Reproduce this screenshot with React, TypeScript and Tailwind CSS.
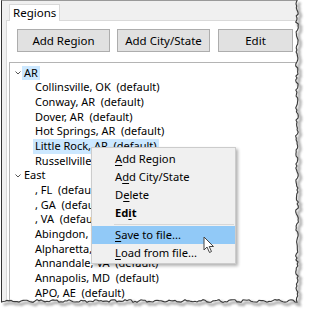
import React from 'react';

const font = { fontFamily: '"Noto Sans", "Open Sans", sans-serif' };

const tree: { label: string; children: string[] }[] = [
  {
    label: 'AR',
    children: [
      'Collinsville, OK',
      'Conway, AR',
      'Dover, AR',
      'Hot Springs, AR',
      'Little Rock, AR',
      'Russellville, AR',
    ],
  },
  {
    label: 'East',
    children: [
      ', FL',
      ', GA',
      ', VA',
      'Abingdon, VA',
      'Alpharetta, GA',
      'Annandale, VA',
      'Annapolis, MD',
      'APO, AE',
    ],
  },
];

// jagged torn edge of the screenshot
const jitter = (i: number) => Math.sin(i * 12.9898 + 78.233) * 43758.5453 % 1;

const edgePoints = () => {
  const pts: [number, number][] = [];
  for (let y = 0; y <= 300; y += 2) pts.push([297 + jitter(y) * 1.4, y]);
  for (let x = 297; x >= 0; x -= 2) pts.push([x, 301 + jitter(x + 500) * 1.4]);
  return pts;
};

const TornEdge = () => {
  const pts = edgePoints();
  const line = pts.map(([x, y], i) => `${i ? 'L' : 'M'}${x.toFixed(1)} ${y.toFixed(1)}`).join(' ');
  const shadow = pts.map(([x, y], i) => `${i ? 'L' : 'M'}${(x + 2.5).toFixed(1)} ${(y + 2.5).toFixed(1)}`).join(' ');
  return (
    <svg className="absolute inset-0 pointer-events-none" width="309" height="311">
      <defs>
        <filter id="blur" x="-10%" y="-10%" width="120%" height="120%">
          <feGaussianBlur stdDeviation="1.2" />
        </filter>
      </defs>
      <path d={`M0 0 H309 V311 H0 Z ${line} L0 0 Z`} fill="#fff" fillRule="evenodd" />
      <path d={shadow} fill="none" stroke="#777" strokeWidth="3" opacity="0.55" filter="url(#blur)" />
      <path d={line} fill="none" stroke="#3a3a3a" strokeWidth="1.1" />
    </svg>
  );
};

const Chevron = () => (
  <svg width="6" height="4" viewBox="0 0 6 4" className="shrink-0">
    <path d="M0.5 0.5 L3 3 L5.5 0.5" fill="none" stroke="#555" strokeWidth="1" />
  </svg>
);

const Btn = ({ label, w }: { label: string; w: string }) => (
  <div className={`${w} h-[23px] bg-[#e1e1e1] border border-[#adadad] flex items-center justify-center text-[11.5px] text-black`}>
    {label}
  </div>
);

const MenuItem = ({ children, active }: { children: React.ReactNode; active?: boolean }) => (
  <div className={`h-[18px] flex items-center pl-[23px] text-[11.2px] text-black ${active ? 'bg-[#91c9f7]' : ''}`}>
    {children}
  </div>
);

export default function App() {
  return (
    <div className="w-[309px] h-[311px] bg-white relative overflow-hidden" style={font}>
      <div className="ml-[1px] w-[298px] h-[302px] border-l border-t border-l-[#333] border-t-[#999] bg-[#f0f0f0] flex flex-col overflow-hidden">
        <div className="h-[19px] pl-[7px] flex items-end shrink-0">
          <div className="h-[17px] px-[3px] bg-white border border-b-0 border-[#d9d9d9] text-[11.5px] leading-[16px] text-black -mb-px relative">
            Regions
          </div>
        </div>
        <div className="ml-[4px] flex-1 bg-white border-t border-l border-[#d9d9d9] flex flex-col">
          <div className="pt-[8px] pl-[10px] flex gap-[7px]">
            <Btn label="Add Region" w="w-[93px]" />
            <Btn label="Add City/State" w="w-[93px]" />
            <div className="ml-px">
              <Btn label="Edit" w="w-[75px]" />
            </div>
          </div>
          <div className="mt-[10px] ml-[2px] flex-1 border-t border-l border-[#b4b4b4] pt-[2.6px] text-[11px] text-black">
            {tree.map((group) => (
              <div key={group.label}>
                <div className="h-[14.67px] flex items-center pl-[5px]">
                  <Chevron />
                  <span className={`ml-[1px] h-full flex items-center px-[2px] ${group.label === 'AR' ? 'bg-[#cce8ff]' : ''}`}>
                    {group.label}
                  </span>
                </div>
                {group.children.map((c) => (
                  <div key={c} className="h-[14.67px] flex items-center pl-[23px]">
                    <span
                      className={`h-full flex items-center px-[2px] whitespace-pre ${c === 'Little Rock, AR' ? 'bg-[#cce8ff]' : ''}`}
                    >
                      {c + '  (default)'}
                    </span>
                  </div>
                ))}
              </div>
            ))}
          </div>
        </div>
      </div>

      {/* context menu */}
      <div className="absolute left-[91px] top-[147px] w-[145px] h-[117px] bg-[#f0f0f0] border border-[#cccccc] pt-[2px] shadow-[2px_2px_3px_rgba(0,0,0,0.3)]">
        <MenuItem>
          <span className="underline underline-offset-2">A</span>dd Region
        </MenuItem>
        <MenuItem>
          A<span className="underline underline-offset-2">d</span>d City/State
        </MenuItem>
        <MenuItem>
          D<span className="underline underline-offset-2">e</span>lete
        </MenuItem>
        <MenuItem>
          <span className="font-bold">
            Ed<span className="underline underline-offset-2">i</span>t
          </span>
        </MenuItem>
        <div className="h-[4px] flex items-center pl-[22px] pr-[1px]">
          <div className="h-px w-full bg-[#d7d7d7]" />
        </div>
        <MenuItem active>
          <span className="underline underline-offset-2">S</span>ave to file...
        </MenuItem>
        <MenuItem>
          <span className="underline underline-offset-2">L</span>oad from file...
        </MenuItem>
      </div>

      {/* mouse pointer */}
      <svg className="absolute left-[203px] top-[236px]" width="13" height="18" viewBox="0 0 13 18">
        <path
          d="M1 1 L1 14 L4 11 L6.5 16.5 L8.5 15.5 L6.2 10.5 L10.5 10.5 Z"
          fill="#fff"
          stroke="#444"
          strokeWidth="1"
          strokeLinejoin="round"
        />
      </svg>

      <TornEdge />
    </div>
  );
}
